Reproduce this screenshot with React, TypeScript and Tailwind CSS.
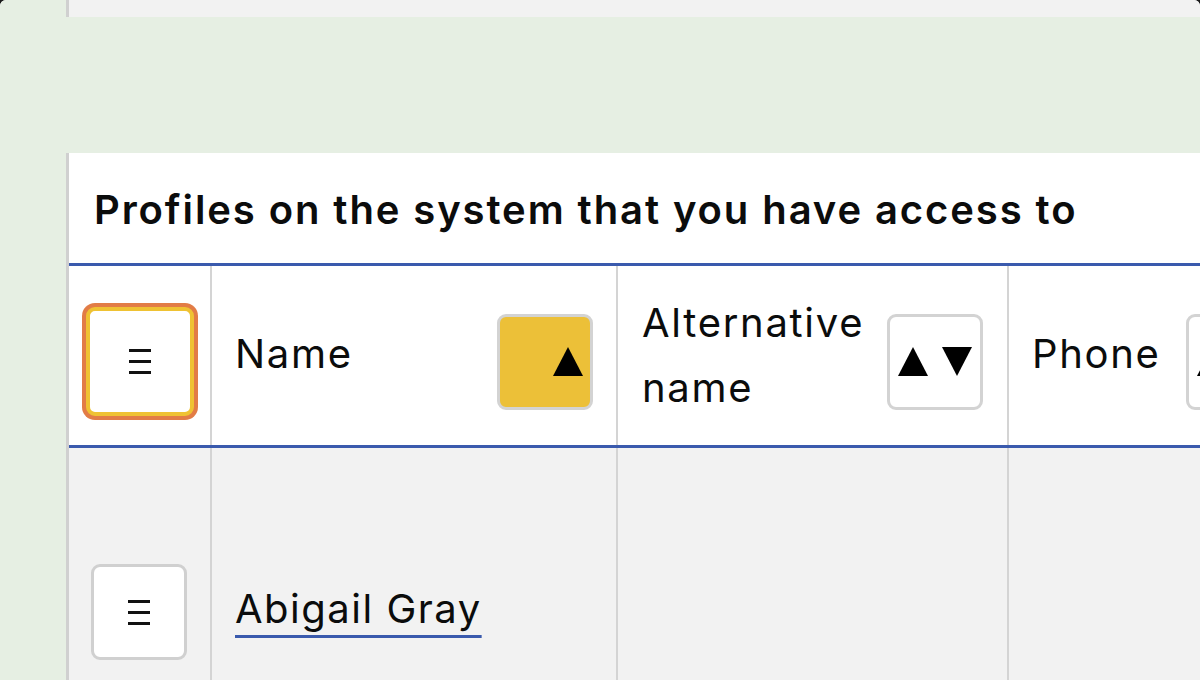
import React from "react";

function MenuGlyph() {
  return (
    <svg width="22" height="25" viewBox="0 0 22 25" aria-hidden="true">
      <rect x="0" y="0" width="22" height="3" fill="#111" />
      <rect x="0" y="11" width="22" height="3" fill="#111" />
      <rect x="0" y="22" width="22" height="3" fill="#111" />
    </svg>
  );
}

function SortButton({ active }: { active?: boolean }) {
  return (
    <button
      className={
        active
          ? "w-[96px] h-[96px] shrink-0 rounded-[9px] border-[3px] border-[#d3d3d3] bg-[#ecc038] flex items-center justify-end pr-[7px]"
          : "w-[96px] h-[96px] shrink-0 rounded-[9px] border-[3px] border-[#d3d3d3] bg-white flex items-center justify-center"
      }
    >
      {active ? (
        <svg width="30" height="29" viewBox="0 0 30 29" aria-hidden="true">
          <polygon points="0,29 15,0 30,29" fill="#000" />
        </svg>
      ) : (
        <svg width="74" height="29" viewBox="0 0 74 29" aria-hidden="true">
          <polygon points="0,29 15,0 30,29" fill="#000" />
          <polygon points="44,0 74,0 59,29" fill="#000" />
        </svg>
      )}
    </button>
  );
}

export default function App() {
  return (
    <div
      className="w-[1200px] h-[680px] overflow-hidden bg-[#1a1a1a]"
      style={{ fontFamily: "Inter, 'Noto Sans', sans-serif" }}
    >
      <div className="flex h-full rounded-t-[6px] overflow-hidden bg-[#fafafa]">
        <aside className="w-[66px] shrink-0 bg-[#e6efe3]" />
        <main className="flex-1 flex flex-col">
          <div className="h-[17px] shrink-0 bg-[#f2f2f2] border-l-[3px] border-[#d0d0d0]" />
          <div className="h-[136px] shrink-0 bg-[#e6efe3]" />
          <section className="flex-1 bg-white border-l-[3px] border-[#d0d0d0] text-[#0b0c0c] tracking-[1.7px]">
            <div className="h-[113px] shrink-0 flex items-center pl-[25px] pt-[3px] border-b-[3px] border-[#3a5aad]">
              <h2 className="text-[40px] font-semibold tracking-[1.9px] whitespace-nowrap">
                Profiles on the system that you have access to
              </h2>
            </div>

            {/* header row */}
            <div className="flex h-[182px] border-b-[3px] border-[#3a5aad] text-[40px]">
              <div className="w-[143px] shrink-0 border-r-2 border-[#d4d4d4] flex items-center justify-center pt-[12px]">
                <div className="w-[116px] h-[117px] rounded-[13px] bg-[#e27c46] p-[4px]">
                  <div className="w-full h-full rounded-[9px] border-[4px] border-[#efc233] bg-white flex items-center justify-center">
                    <MenuGlyph />
                  </div>
                </div>
              </div>
              <div className="w-[406px] shrink-0 border-r-2 border-[#d4d4d4] flex items-center justify-between pl-[23px] pr-[23px] pt-[12px]">
                <span className="-mt-[16px]">Name</span>
                <SortButton active />
              </div>
              <div className="w-[391px] shrink-0 border-r-2 border-[#d4d4d4] flex items-center justify-between pl-[24px] pr-[24px] pt-[12px]">
                <span className="leading-[65px] -mt-[14px] w-[236px]">Alternative name</span>
                <SortButton />
              </div>
              <div className="flex-1 flex items-center gap-[25px] pl-[23px] pt-[12px] overflow-hidden">
                <span className="-mt-[16px]">Phone</span>
                <SortButton />
              </div>
            </div>

            {/* body row */}
            <div className="flex h-full bg-[#f2f2f2] text-[40px]">
              <div className="w-[143px] shrink-0 border-r-2 border-[#d4d4d4] flex justify-center pt-[116px] pr-[2px]">
                <div className="w-[96px] h-[96px] rounded-[9px] border-[3px] border-[#d0d0d0] bg-white flex items-center justify-center">
                  <MenuGlyph />
                </div>
              </div>
              <div className="w-[406px] shrink-0 border-r-2 border-[#d4d4d4] pl-[23px] pt-[131px]">
                <a
                  href="#"
                  className="underline decoration-[3px] underline-offset-[12px] decoration-[#3a5aad] text-[#0b0c0c] tracking-[1.5px]"
                >
                  Abigail Gray
                </a>
              </div>
              <div className="w-[391px] shrink-0 border-r-2 border-[#d4d4d4]" />
              <div className="flex-1" />
            </div>
          </section>
        </main>
        <div className="w-[2px] shrink-0 bg-white" />
      </div>
    </div>
  );
}
